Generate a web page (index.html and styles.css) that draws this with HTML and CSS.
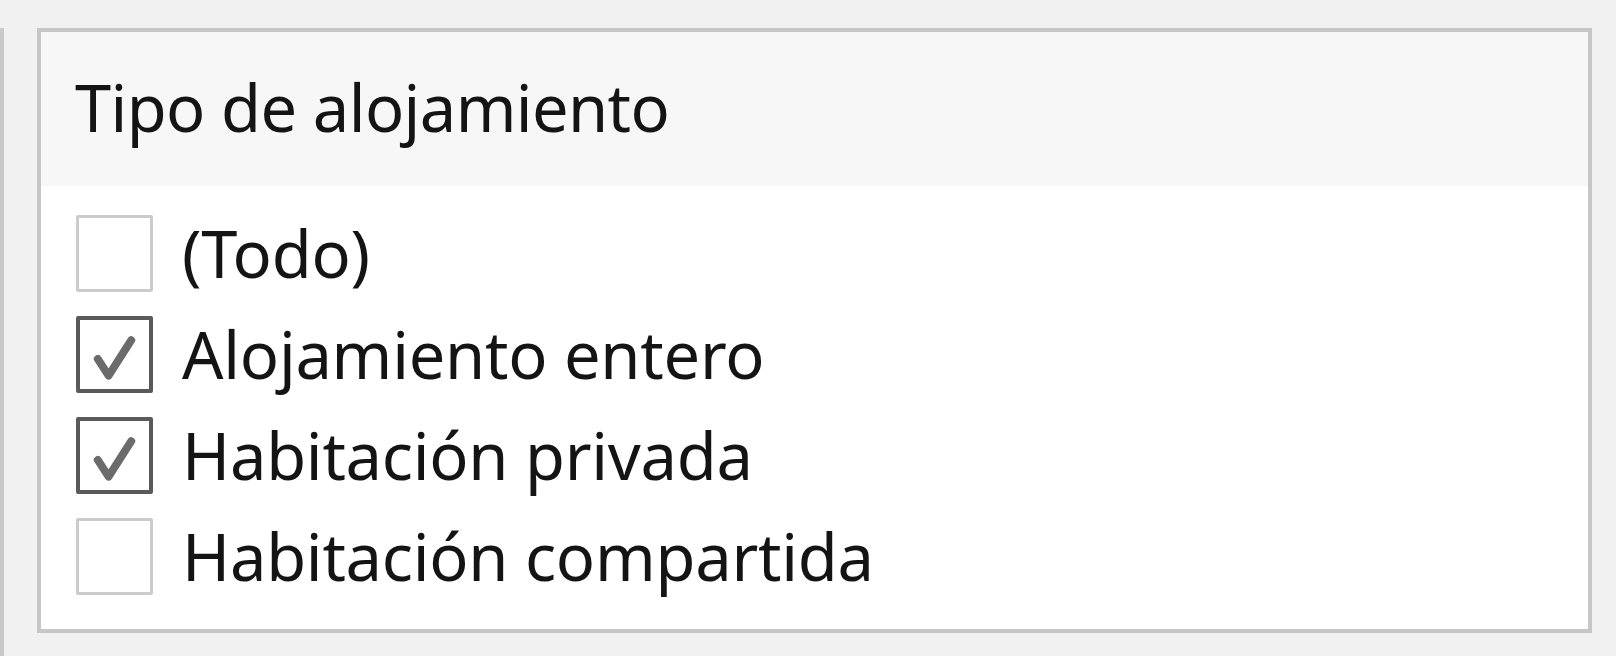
FILE: index.html
```html
<!DOCTYPE html>
<html lang="es">
<head>
<meta charset="utf-8">
<link rel="stylesheet" href="styles.css">
</head>
<body>
<div class="page">
  <div class="strip"></div>
  <div class="panel">
    <div class="header"><span class="title">Tipo de alojamiento</span></div>
    <div class="list">
      <div class="row"><span class="box"></span><span class="label">(Todo)</span></div>
      <div class="row"><span class="box checked"><svg viewBox="0 0 70 70" width="70" height="70"><path d="M18 39 L29 56 L52 20" /></svg></span><span class="label">Alojamiento entero</span></div>
      <div class="row"><span class="box checked"><svg viewBox="0 0 70 70" width="70" height="70"><path d="M18 39 L29 56 L52 20" /></svg></span><span class="label">Habitación privada</span></div>
      <div class="row"><span class="box"></span><span class="label">Habitación compartida</span></div>
    </div>
  </div>
</div>
</body>
</html>
```
FILE: styles.css
```css
html, body {
  margin: 0;
  padding: 0;
  background: #f1f1f1;
}
.page {
  width: 1616px;
  height: 656px;
  display: flex;
  align-items: flex-start;
  padding-top: 28px;
  box-sizing: border-box;
}
.strip {
  width: 4px;
  align-self: stretch;
  background: #c9c9c9;
}
.panel {
  margin-left: 33px;
  width: 1555px;
  height: 605px;
  box-sizing: border-box;
  border: 4px solid #c6c6c6;
  background: #ffffff;
  display: flex;
  flex-direction: column;
  font-family: "Noto Sans", "Open Sans", sans-serif;
  color: #141414;
}
.header {
  height: 154px;
  background: #f7f7f7;
  display: flex;
  align-items: center;
  padding-left: 34px;
  box-sizing: border-box;
}
.title {
  font-size: 65px;
  letter-spacing: -0.6px;
  line-height: 1;
  padding-bottom: 3px;
}
.list {
  padding-top: 17px;
  padding-left: 35px;
  display: flex;
  flex-direction: column;
}
.row {
  height: 101px;
  display: flex;
  align-items: center;
}
.box {
  width: 77px;
  height: 77px;
  box-sizing: border-box;
  border: 3px solid #cbcbcb;
  border-radius: 2px;
  display: flex;
  align-items: center;
  justify-content: center;
  flex: none;
}
.box.checked {
  border: 4px solid #5a5a5a;
}
.box svg path {
  fill: none;
  stroke: #6b6b6b;
  stroke-width: 8;
  stroke-linecap: round;
  stroke-linejoin: round;
}
.label {
  margin-left: 29px;
  font-size: 65px;
  letter-spacing: -0.25px;
  line-height: 1;
  padding-bottom: 1px;
}
```
